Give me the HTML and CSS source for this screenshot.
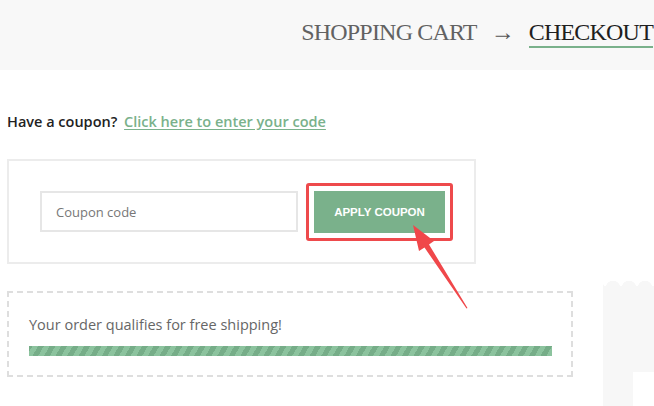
FILE: index.html
```html
<!DOCTYPE html>
<html lang="en">
<head>
<meta charset="utf-8">
<title>Checkout</title>
<link rel="stylesheet" href="styles.css">
</head>
<body>
<header class="steps">
  <span class="step">SHOPPING CART</span>
  <span class="step-arrow">&rarr;</span>
  <span class="step step-current">CHECKOUT</span>
</header>
<main class="page">
  <div class="main-col">
    <p class="notice">Have a coupon? <a class="notice-link" href="#">Click here to enter your code</a></p>
    <form class="coupon">
      <input class="coupon-input" type="text" placeholder="Coupon code">
      <span class="highlight">
        <button class="coupon-btn" type="button">APPLY COUPON</button>
      </span>
    </form>
    <div class="shipping">
      <p class="shipping-text">Your order qualifies for free shipping!</p>
      <div class="shipping-bar"></div>
    </div>
  </div>
  <aside class="summary">
    <div class="summary-inner"></div>
  </aside>
  <svg class="pointer" width="654" height="406" viewBox="0 0 654 406">
    <polygon fill="#f0474a" points="413,225 434,241 429,244.5 467.5,308 466.5,308.5 424.5,247.5 419,251"/>
  </svg>
</main>
</body>
</html>
```

FILE: styles.css
```css
* { box-sizing: border-box; }
html, body { margin: 0; padding: 0; background: #fff; }
body {
  width: 654px;
  height: 406px;
  overflow: hidden;
  font-family: "Open Sans", "Liberation Sans", sans-serif;
}

.steps {
  height: 70px;
  background: #f8f8f8;
  display: flex;
  justify-content: flex-end;
  align-items: flex-start;
  padding-top: 20px;
  font-family: "Liberation Serif", serif;
  font-size: 24px;
  line-height: 25px;
  white-space: nowrap;
}
.step {
  display: inline-block;
  color: #626262;
  letter-spacing: -0.8px;
}
.step-arrow {
  color: #555;
  font-size: 24px;
  margin: 0 14px 0 14px;
}
.step-current {
  color: #1f1f1f;
  border-bottom: 2px solid #7ab18b;
  padding-bottom: 1px;
  margin-right: 1px;
}

.page {
  position: relative;
  display: flex;
  padding: 42px 0 0 7px;
}
.main-col {
  width: 566px;
  flex: none;
}
.notice {
  margin: 0;
  font-size: 14.5px;
  line-height: 20px;
  font-weight: 600;
  color: #222;
}
.notice-link {
  margin-left: 3px;
  color: #7ab18b;
  text-decoration: underline;
  text-underline-offset: 2px;
}

.coupon {
  margin: 27px 0 0 0;
  width: 469px;
  height: 105px;
  border: 2px solid #ececec;
  display: flex;
  align-items: center;
  padding-left: 31px;
}
.coupon-input {
  width: 258px;
  height: 41px;
  border: 2px solid #e6e6e6;
  padding: 0 14px;
  font-family: "Open Sans", "Liberation Sans", sans-serif;
  font-size: 13px;
  color: #666;
  background: #fff;
  outline: none;
}
.coupon-input::placeholder { color: #777; }
.highlight {
  margin-left: 8px;
  border: 3px solid #ee4a4c;
  border-radius: 3px;
  padding: 5px;
  display: flex;
}
.coupon-btn {
  width: 131px;
  height: 42px;
  border: 0;
  background: #7ab18b;
  color: #fff;
  font-family: "Liberation Sans", sans-serif;
  font-weight: 700;
  font-size: 11.5px;
  padding: 0;
}

.shipping {
  margin-top: 27px;
  width: 566px;
  height: 86px;
  border: 2px dashed #dedede;
  padding: 22px 19px 0 20px;
}
.shipping-text {
  margin: 0;
  font-size: 14.5px;
  line-height: 20px;
  color: #666;
}
.shipping-bar {
  margin-top: 11px;
  height: 10px;
  background: repeating-linear-gradient(
    -60deg,
    #8cc39e 0,
    #8cc39e 5px,
    #76ad88 5px,
    #76ad88 10px
  );
}

.summary {
  position: relative;
  margin: 174px 0 0 30px;
  flex: 1;
  height: 120px;
  background: #f7f7f7;
  padding: 86px 0 0 30px;
}
.summary::before {
  content: "";
  position: absolute;
  left: 0;
  right: 0;
  top: -7px;
  height: 8px;
  background: radial-gradient(circle at 8px 9px, #f7f7f7 7px, transparent 7.5px) 2px 0 / 16px 8px repeat-x;
}
.summary-inner {
  height: 34px;
  background: #fff;
}

.pointer {
  position: absolute;
  left: 0;
  top: -70px;
  pointer-events: none;
}
```
